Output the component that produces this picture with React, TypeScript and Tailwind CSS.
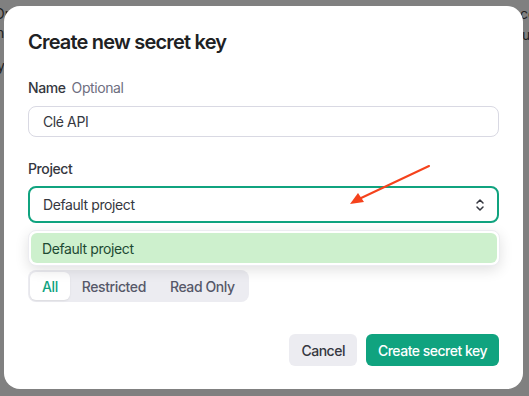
import React from 'react';

export default function App() {
  return (
    <div className="relative w-[529px] h-[396px] overflow-hidden bg-[#808080] font-['Inter',sans-serif]">
      {/* Page behind the backdrop */}
      <div className="absolute inset-0 text-[14px] text-[#1f1f1f]">
        <span className="absolute left-[-6px] top-[3px]">Or</span>
        <span className="absolute left-[-4px] top-[22px]">nt</span>
        <span className="absolute left-[-3px] top-[55px]">y</span>
        <span className="absolute left-[520px] top-[3px]">co</span>
        <span className="absolute left-[522px] top-[24px]">u</span>
      </div>

      {/* Modal */}
      <div className="absolute left-[4px] top-[6px] w-[519px] h-[383px] rounded-[16px] bg-white px-[24px] pt-[24px] tracking-[-0.4px]">
        <h2 className="text-[20px] leading-[24px] font-semibold text-[#202123] tracking-[-0.8px]">Create new secret key</h2>

        <div className="mt-[24px] flex items-center gap-[6px] text-[14px] leading-[20px]">
          <span className="font-medium text-[#353740]">Name</span>
          <span className="text-[#6e6e80]">Optional</span>
        </div>
        <div className="mt-[8px] h-[31px] rounded-[8px] border border-[#d9d9e3] flex items-center px-[14px] text-[14px] text-[#353740]">
          Clé API
        </div>

        <div className="mt-[22px] text-[14px] leading-[20px] font-medium text-[#353740]">Project</div>
        <div className="relative mt-[7px]">
          <div className="h-[37px] rounded-[8px] border-2 border-[#10a37f] flex items-center justify-between pl-[13px] pr-[12px] text-[14px] text-[#353740]">
            <span>Default project</span>
            <svg width="10" height="14" viewBox="0 0 10 14" fill="none" stroke="#353740" strokeWidth="1.5" strokeLinecap="round" strokeLinejoin="round">
              <path d="M2 5 L5 2 L8 5" />
              <path d="M2 9 L5 12 L8 9" />
            </svg>
          </div>

          {/* Annotation arrow */}
          <svg className="absolute left-[303px] top-[-21px]" width="100" height="48" viewBox="0 0 100 48">
            <line x1="98" y1="1" x2="28" y2="34" stroke="#f5421c" strokeWidth="2" strokeLinecap="round" />
            <path d="M19 39 L27 28 L33 37 Z" fill="#f5421c" />
          </svg>

          {/* Dropdown menu */}
          <div className="absolute left-0 right-[-1px] top-[44px] z-10 rounded-[8px] bg-white border border-[#ececf1] shadow-[0_4px_14px_rgba(0,0,0,0.12)] p-[2px]">
            <div className="h-[30px] rounded-[6px] bg-[#cdf0cd] flex items-center px-[11px] text-[14px] text-[#1d4a33]">
              Default project
            </div>
          </div>
        </div>

        <div className="mt-[47px] inline-flex items-center rounded-[8px] bg-[#ececf1] p-[2px] text-[14px] font-medium">
          <div className="h-[28px] px-[12px] flex items-center rounded-[6px] bg-white text-[#10a37f] shadow-[0_1px_2px_rgba(0,0,0,0.08)]">All</div>
          <div className="h-[28px] px-[12px] flex items-center text-[#565869]">Restricted</div>
          <div className="h-[28px] px-[12px] flex items-center text-[#565869]">Read Only</div>
        </div>

        <div className="mt-[32px] flex justify-end gap-[9px] tracking-[-0.5px]">
          <button className="h-[32px] px-[12px] rounded-[6px] bg-[#ececf1] text-[14px] font-medium text-[#353740]">Cancel</button>
          <button className="h-[32px] px-[12px] rounded-[6px] bg-[#10a37f] text-[14px] font-medium text-white">Create secret key</button>
        </div>
      </div>
    </div>
  );
}
